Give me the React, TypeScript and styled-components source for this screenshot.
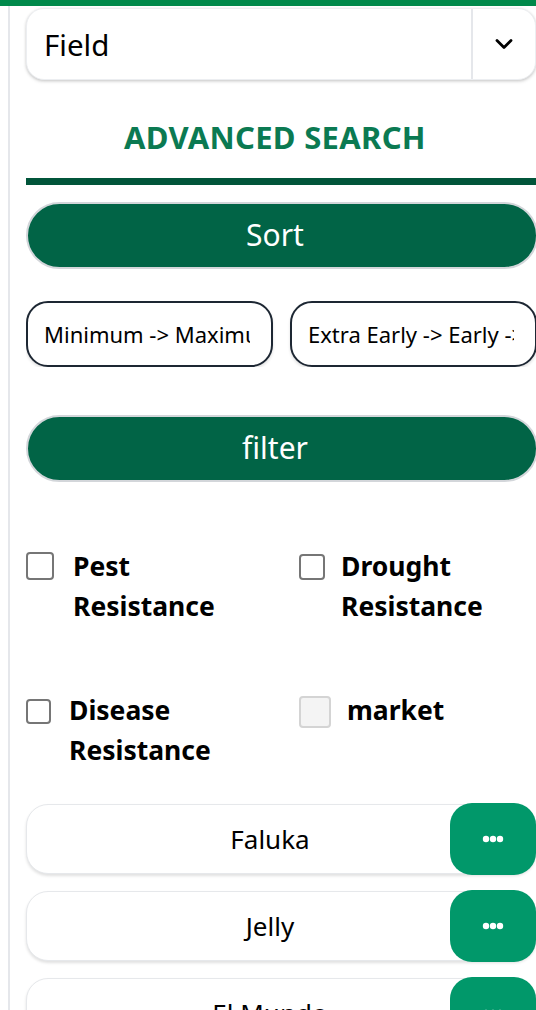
import React from "react";
import styled, { createGlobalStyle } from "styled-components";

const Global = createGlobalStyle`
  html, body { margin: 0; padding: 0; background: #ffffff; }
  body { font-family: "Noto Sans", "Open Sans", sans-serif; color: #000; overflow: hidden; width: 536px; }
  * { box-sizing: border-box; }
`;

const TopBar = styled.div`
  height: 6px;
  background: #00894b;
`;

const Shell = styled.div`
  margin-left: 8px;
  border-left: 2px solid #e5e7eb;
  padding-left: 16px;
  width: 528px;
  min-height: 1004px;
  display: flex;
  flex-direction: column;
`;

const SelectBox = styled.div`
  margin-top: 2px;
  height: 72px;
  width: 510px;
  border-radius: 18px;
  background: #fff;
  box-shadow: 0 1px 3px rgba(0,0,0,0.18), 0 2px 4px rgba(0,0,0,0.06);
  border: 1px solid #eceef1;
  display: flex;
  align-items: stretch;
`;

const SelectValue = styled.div`
  flex: 1;
  display: flex;
  align-items: center;
  padding-left: 17px;
  font-size: 29.5px;
  border-right: 2px solid #e5e7eb;
`;

const SelectArrow = styled.div`
  width: 62px;
  display: flex;
  align-items: center;
  justify-content: center;
`;

const Heading = styled.h2`
  margin: 0;
  padding-top: 37px;
  padding-right: 12px;
  height: 98px;
  text-align: center;
  font-size: 31px;
  font-weight: 700;
  color: #0b7a52;
  letter-spacing: 0.3px;
  line-height: 40px;
`;

const Rule = styled.div`
  height: 7px;
  width: 510px;
  background: #01553a;
`;

const PillButton = styled.button<{ $mt: number }>`
  margin-top: ${(p) => p.$mt}px;
  width: 512px;
  height: 67px;
  border-radius: 34px;
  border: 2px solid #d3d6da;
  background: #016446;
  color: #fff;
  font-family: "Noto Sans", sans-serif;
  font-size: 30px;
  display: flex;
  align-items: center;
  justify-content: center;
  padding: 0 14px 2px 0;
`;

const OptionRow = styled.div`
  margin-top: 32px;
  display: flex;
  gap: 17px;
  width: 530px;
  overflow: hidden;
`;

const OptionPill = styled.div`
  flex: 0 0 247px;
  height: 66px;
  border: 2px solid #1d2733;
  border-radius: 22px;
  background: #fff;
  box-shadow: 0 2px 3px rgba(0,0,0,0.12);
  padding: 0 21px 0 16px;
  display: flex;
  align-items: center;
  overflow: hidden;
  white-space: nowrap;
  font-size: 22px;
`;

const OptionText = styled.span`
  display: block;
  overflow: hidden;
  white-space: nowrap;
`;

const CheckGrid = styled.div`
  margin-top: 64px;
  display: grid;
  grid-template-columns: 273px 237px;
  row-gap: 64px;
`;

const CheckItem = styled.label<{ $gap: number; $boxTop: number }>`
  display: flex;
  align-items: flex-start;
  gap: ${(p) => p.$gap}px;
  & > span:first-child { margin-top: ${(p) => p.$boxTop}px; }
`;

const Box = styled.span<{ $size: number; $disabled?: boolean }>`
  flex: 0 0 auto;
  width: ${(p) => p.$size}px;
  height: ${(p) => p.$size}px;
  border-radius: 4px;
  border: 2px solid ${(p) => (p.$disabled ? "#d4d4d4" : "#767676")};
  background: ${(p) => (p.$disabled ? "#f4f4f4" : "#fff")};
`;

const CheckLabel = styled.span`
  font-size: 26.5px;
  font-weight: 700;
  line-height: 40px;
`;

const List = styled.div`
  margin-top: 34px;
  display: flex;
  flex-direction: column;
  gap: 17px;
`;

const ListItem = styled.div`
  position: relative;
  width: 510px;
  height: 70px;
  border-radius: 22px;
  border: 1px solid #e6e8eb;
  background: #fff;
  box-shadow: 0 2px 3px rgba(0,0,0,0.12);
  display: flex;
  align-items: center;
  justify-content: center;
  padding-right: 22px;
  font-size: 26px;
`;

const MoreButton = styled.div`
  position: absolute;
  right: -1px;
  top: -2px;
  width: 86px;
  height: 72px;
  border-radius: 22px;
  background: #01986a;
  display: flex;
  align-items: center;
  justify-content: center;
`;

const Dots = () => (
  <svg width="22" height="8" viewBox="0 0 22 8">
    <circle cx="4" cy="4" r="3.2" fill="#fff" />
    <circle cx="11" cy="4" r="3.2" fill="#fff" />
    <circle cx="18" cy="4" r="3.2" fill="#fff" />
  </svg>
);

const Chevron = () => (
  <svg width="18" height="12" viewBox="0 0 18 12">
    <path d="M2 2.5 L9 9.5 L16 2.5" stroke="#000" strokeWidth="2.8" fill="none" strokeLinecap="round" strokeLinejoin="round" />
  </svg>
);

const checks = [
  { label: ["Pest", "Resistance"], size: 28, gap: 19, top: 6 },
  { label: ["Drought", "Resistance"], size: 26, gap: 16, top: 8 },
  { label: ["Disease", "Resistance"], size: 25, gap: 18, top: 9 },
  { label: ["market"], size: 32, gap: 16, top: 6, disabled: true },
];

export default function App() {
  return (
    <>
      <Global />
      <TopBar />
      <Shell>
        <SelectBox>
          <SelectValue>Field</SelectValue>
          <SelectArrow>
            <Chevron />
          </SelectArrow>
        </SelectBox>
        <Heading>ADVANCED SEARCH</Heading>
        <Rule />
        <PillButton $mt={17}>Sort</PillButton>
        <OptionRow>
          <OptionPill>
            <OptionText>Minimum -&gt; Maximum</OptionText>
          </OptionPill>
          <OptionPill>
            <OptionText>Extra Early -&gt; Early -&gt; Late</OptionText>
          </OptionPill>
        </OptionRow>
        <PillButton $mt={48}>filter</PillButton>
        <CheckGrid>
          {checks.map((c) => (
            <CheckItem key={c.label.join(" ")} $gap={c.gap} $boxTop={c.top}>
              <Box $size={c.size} $disabled={c.disabled} />
              <CheckLabel>
                {c.label.map((l, i) => (
                  <React.Fragment key={l}>
                    {i > 0 && <br />}
                    {l}
                  </React.Fragment>
                ))}
              </CheckLabel>
            </CheckItem>
          ))}
        </CheckGrid>
        <List>
          {["Faluka", "Jelly", "El Mundo"].map((n) => (
            <ListItem key={n}>
              {n}
              <MoreButton>
                <Dots />
              </MoreButton>
            </ListItem>
          ))}
        </List>
      </Shell>
    </>
  );
}
